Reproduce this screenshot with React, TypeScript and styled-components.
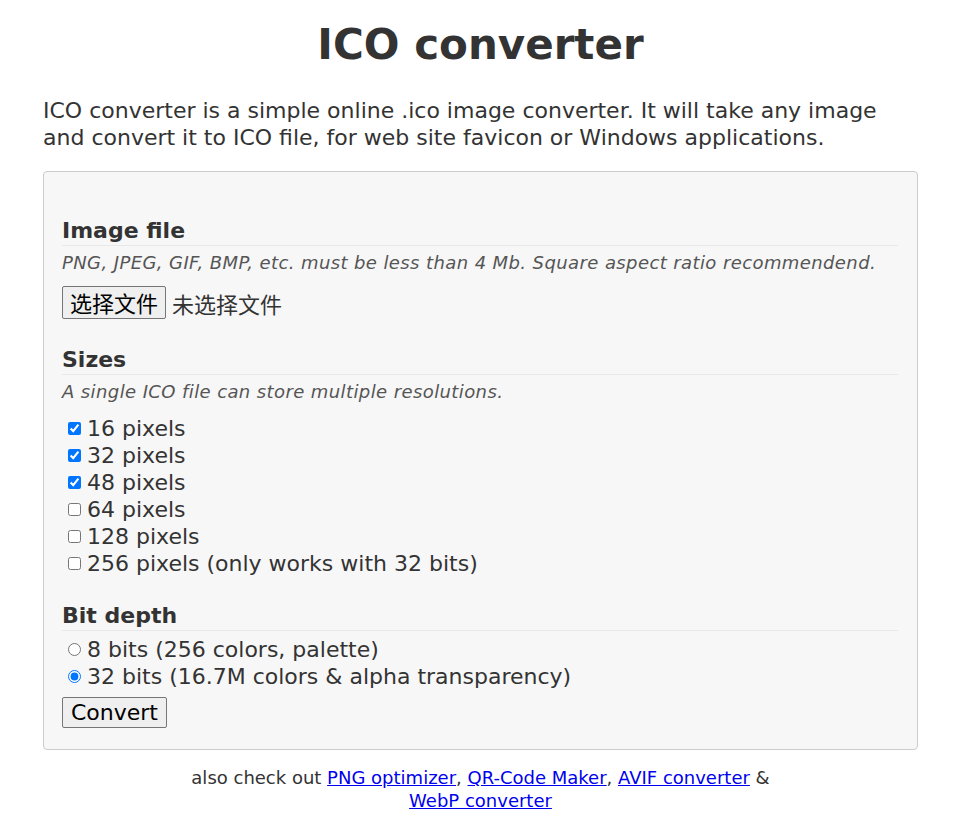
import { FC, JSX, useState } from 'react';
import styled, { createGlobalStyle } from 'styled-components';

const GlobalStyle = createGlobalStyle`
  html, body {
    margin: 0;
    padding: 0;
    background: #fff;
  }
  body {
    font-family: 'DejaVu Sans', Verdana, 'Noto Sans CJK SC', sans-serif;
    color: #333;
  }
`;

const Page = styled.main`
  width: 875px;
  margin: 0 0 0 43px;
  padding-bottom: 20px;
`;

const Title = styled.h1`
  margin: 17px 0 0;
  text-align: center;
  font-size: 42px;
  line-height: 56px;
  font-weight: bold;
`;

const Intro = styled.p`
  margin: 24px 0 20px;
  font-size: 22px;
  line-height: 27px;
`;

const Panel = styled.form`
  background: #f7f7f7;
  border: 1px solid #ccc;
  border-radius: 4px;
  padding: 44px 19px 21px 18px;
`;

const Section = styled.section<{ $gap?: number }>`
  margin-bottom: ${p => p.$gap ?? 0}px;
`;

const Legend = styled.h2`
  margin: 0;
  font-size: 22px;
  line-height: 29px;
  font-weight: bold;
  border-bottom: 1px solid #e8e8e8;
`;

const Hint = styled.p`
  margin: 5px 0 11px;
  font-size: 18px;
  letter-spacing: 0.4px;
  line-height: 24px;
  font-style: italic;
  color: #555;
`;

const FileRow = styled.div`
  display: flex;
  align-items: center;
  gap: 6px;
  font-family: 'Noto Sans CJK SC', sans-serif;
  font-size: 22px;
`;

const NativeButton = styled.button`
  box-sizing: border-box;
  height: 33px;
  font-family: inherit;
  font-size: 22px;
  color: #000;
  background: #efefef;
  border: 1px solid #767676;
  border-radius: 2px;
  padding: 0 7px;
  line-height: 29px;
`;

const FileStatus = styled.span`
  color: #333;
`;

const Option = styled.label`
  display: flex;
  align-items: center;
  font-size: 22px;
  line-height: 27px;

  input {
    margin: 0 6px 0 6px;
    width: 13px;
    height: 13px;
  }
`;

const RadioGroup = styled.div`
  margin-top: 5px;
`;

const ConvertButton = styled(NativeButton)`
  display: block;
  height: 31px;
  font-family: 'DejaVu Sans', Verdana, sans-serif;
  margin-top: 7px;
  line-height: 27px;
  padding: 0 8px;
`;

const Footer = styled.p`
  max-width: 600px;
  margin: 16px auto 0;
  text-align: center;
  font-size: 18px;
  line-height: 23px;

  a {
    color: #00e;
  }
`;

const sizes = [
  { value: 16, label: '16 pixels', on: true },
  { value: 32, label: '32 pixels', on: true },
  { value: 48, label: '48 pixels', on: true },
  { value: 64, label: '64 pixels', on: false },
  { value: 128, label: '128 pixels', on: false },
  { value: 256, label: '256 pixels (only works with 32 bits)', on: false },
];

const App: FC = (): JSX.Element => {
  const [bits, setBits] = useState('32');

  return (
    <>
      <GlobalStyle/>
      <Page>
        <Title>ICO converter</Title>
        <Intro>
          ICO converter is a simple online .ico image converter. It will take any image
          and convert it to ICO file, for web site favicon or Windows applications.
        </Intro>
        <Panel onSubmit={e => e.preventDefault()}>
          <Section $gap={26}>
            <Legend>Image file</Legend>
            <Hint>PNG, JPEG, GIF, BMP, etc. must be less than 4 Mb. Square aspect ratio recommendend.</Hint>
            <FileRow>
              <NativeButton type={'button'}>选择文件</NativeButton>
              <FileStatus>未选择文件</FileStatus>
            </FileRow>
          </Section>
          <Section $gap={24}>
            <Legend>Sizes</Legend>
            <Hint>A single ICO file can store multiple resolutions.</Hint>
            {sizes.map(s => (
              <Option key={s.value}>
                <input type={'checkbox'} defaultChecked={s.on}/>
                {s.label}
              </Option>
            ))}
          </Section>
          <Section>
            <Legend>Bit depth</Legend>
            <RadioGroup>
              <Option>
                <input type={'radio'} name={'bits'} checked={bits === '8'} onChange={() => setBits('8')}/>
                8 bits (256 colors, palette)
              </Option>
              <Option>
                <input type={'radio'} name={'bits'} checked={bits === '32'} onChange={() => setBits('32')}/>
                32 bits (16.7M colors &amp; alpha transparency)
              </Option>
            </RadioGroup>
            <ConvertButton type={'submit'}>Convert</ConvertButton>
          </Section>
        </Panel>
        <Footer>
          also check out <a href={'#'}>PNG optimizer</a>, <a href={'#'}>QR-Code Maker</a>, <a href={'#'}>AVIF converter</a> &amp;{' '}
          <a href={'#'}>WebP converter</a>
        </Footer>
      </Page>
    </>
  );
};

export default App;
